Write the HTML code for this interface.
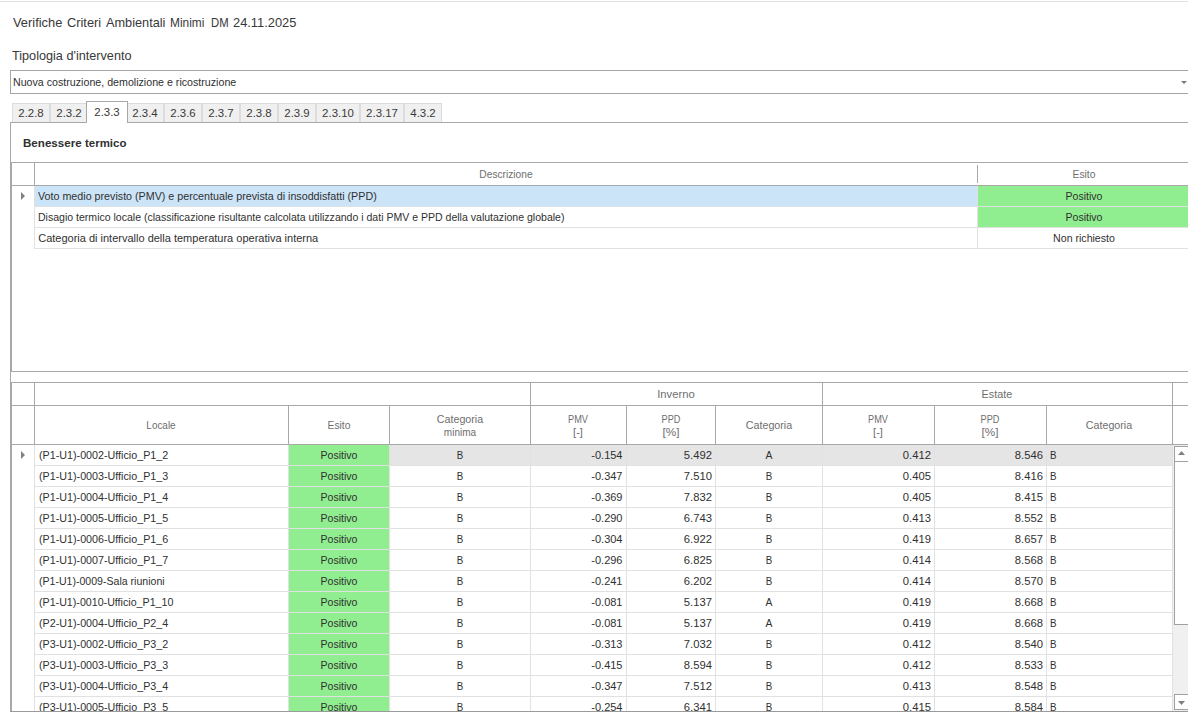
<!DOCTYPE html>
<html lang="it"><head><meta charset="utf-8"><title>Verifiche CAM</title><style>
html,body{margin:0;padding:0;background:#fff;}
body{width:1188px;height:712px;overflow:hidden;font-family:"Liberation Sans",sans-serif;}
#root{position:relative;width:1188px;height:712px;overflow:hidden;background:#fff;}
.r{position:absolute;display:block;}
.t,.t13,.tb,.h,.tab{position:absolute;white-space:nowrap;font-size:11px;line-height:20px;margin-top:-14px;color:#303030;}
.t13{font-size:13px;line-height:20px;margin-top:-15px;color:#383838;}
.tb{font-weight:bold;}
.h{color:#6e6e6e;}
.tab{color:#3a3a3a;}
</style></head><body><div id="root">
<div class="r" style="left:0px;top:1px;width:1188px;height:1px;background:#e3e3e3;"></div>
<div class="t13" style="transform:scaleX(0.9886);transform-origin:left center;left:13.2px;top:28px;">Verifiche</div>
<div class="t13" style="transform:scaleX(0.9836);transform-origin:left center;left:66.9px;top:28px;">Criteri</div>
<div class="t13" style="transform:scaleX(0.9786);transform-origin:left center;left:106.0px;top:28px;">Ambientali</div>
<div class="t13" style="transform:scaleX(0.9132);transform-origin:left center;left:169.7px;top:28px;">Minimi</div>
<div class="t13" style="transform:scaleX(0.8704);transform-origin:left center;left:210.9px;top:28px;">DM</div>
<div class="t13" style="transform:scaleX(0.9889);transform-origin:left center;left:232.8px;top:28px;">24.11.2025</div>
<div class="t13" style="transform:scaleX(0.9740);transform-origin:left center;left:12px;top:61px;">Tipologia d'intervento</div>
<div class="r" style="left:10px;top:70px;width:1178px;height:1px;background:#a6a6a6;"></div>
<div class="r" style="left:10px;top:93px;width:1178px;height:1px;background:#a6a6a6;"></div>
<div class="r" style="left:10px;top:70px;width:1px;height:24px;background:#a6a6a6;"></div>
<div class="t" style="transform:scaleX(0.9685);transform-origin:left center;left:13px;top:86px;">Nuova costruzione, demolizione e ricostruzione</div>
<svg class="r" style="left:1180px;top:81px" width="8" height="4" viewBox="0 0 8 4"><path d="M1 0h6l-3 3z" fill="#7a7a7a"/></svg>
<div class="r" style="left:12px;top:103px;width:38px;height:19px;background:#f0f0f0;border:1px solid #dcdcdc;border-bottom:none;box-sizing:border-box;"></div>
<div class="r" style="left:50px;top:103px;width:38px;height:19px;background:#f0f0f0;border:1px solid #dcdcdc;border-bottom:none;box-sizing:border-box;"></div>
<div class="r" style="left:126px;top:103px;width:38px;height:19px;background:#f0f0f0;border:1px solid #dcdcdc;border-bottom:none;box-sizing:border-box;"></div>
<div class="r" style="left:164px;top:103px;width:38px;height:19px;background:#f0f0f0;border:1px solid #dcdcdc;border-bottom:none;box-sizing:border-box;"></div>
<div class="r" style="left:202px;top:103px;width:38px;height:19px;background:#f0f0f0;border:1px solid #dcdcdc;border-bottom:none;box-sizing:border-box;"></div>
<div class="r" style="left:240px;top:103px;width:38px;height:19px;background:#f0f0f0;border:1px solid #dcdcdc;border-bottom:none;box-sizing:border-box;"></div>
<div class="r" style="left:278px;top:103px;width:38px;height:19px;background:#f0f0f0;border:1px solid #dcdcdc;border-bottom:none;box-sizing:border-box;"></div>
<div class="r" style="left:316px;top:103px;width:44px;height:19px;background:#f0f0f0;border:1px solid #dcdcdc;border-bottom:none;box-sizing:border-box;"></div>
<div class="r" style="left:360px;top:103px;width:44px;height:19px;background:#f0f0f0;border:1px solid #dcdcdc;border-bottom:none;box-sizing:border-box;"></div>
<div class="r" style="left:404px;top:103px;width:38px;height:19px;background:#f0f0f0;border:1px solid #dcdcdc;border-bottom:none;box-sizing:border-box;"></div>
<div class="r" style="left:10px;top:122px;width:1178px;height:1px;background:#a8a8a8;"></div>
<div class="r" style="left:10px;top:122px;width:1px;height:590px;background:#a8a8a8;"></div>
<div class="r" style="left:86px;top:101px;width:42px;height:22px;background:#ffffff;border:1px solid #a8a8a8;border-bottom:none;box-sizing:border-box;"></div>
<div class="tab" style="transform:scaleX(1.0400);transform-origin:center center;left:-119.0px;width:300px;text-align:center;top:117px;">2.2.8</div>
<div class="tab" style="transform:scaleX(1.0400);transform-origin:center center;left:-81.0px;width:300px;text-align:center;top:117px;">2.3.2</div>
<div class="tab" style="transform:scaleX(1.0400);transform-origin:center center;left:-43.0px;width:300px;text-align:center;top:116px;">2.3.3</div>
<div class="tab" style="transform:scaleX(1.0400);transform-origin:center center;left:-5.0px;width:300px;text-align:center;top:117px;">2.3.4</div>
<div class="tab" style="transform:scaleX(1.0400);transform-origin:center center;left:33.0px;width:300px;text-align:center;top:117px;">2.3.6</div>
<div class="tab" style="transform:scaleX(1.0400);transform-origin:center center;left:71.0px;width:300px;text-align:center;top:117px;">2.3.7</div>
<div class="tab" style="transform:scaleX(1.0400);transform-origin:center center;left:109.0px;width:300px;text-align:center;top:117px;">2.3.8</div>
<div class="tab" style="transform:scaleX(1.0400);transform-origin:center center;left:147.0px;width:300px;text-align:center;top:117px;">2.3.9</div>
<div class="tab" style="transform:scaleX(1.0400);transform-origin:center center;left:188.0px;width:300px;text-align:center;top:117px;">2.3.10</div>
<div class="tab" style="transform:scaleX(1.0400);transform-origin:center center;left:232.0px;width:300px;text-align:center;top:117px;">2.3.17</div>
<div class="tab" style="transform:scaleX(1.0400);transform-origin:center center;left:273.0px;width:300px;text-align:center;top:117px;">4.3.2</div>
<div class="tb" style="transform:scaleX(1.0528);transform-origin:left center;left:22.6px;top:147px;">Benessere</div>
<div class="tb" style="transform:scaleX(1.0415);transform-origin:left center;left:84.7px;top:147px;">termico</div>
<div class="r" style="left:11px;top:162px;width:1px;height:210px;background:#a8a8a8;"></div>
<div class="r" style="left:11px;top:162px;width:1177px;height:1px;background:#a8a8a8;"></div>
<div class="r" style="left:11px;top:185px;width:1177px;height:1px;background:#a8a8a8;"></div>
<div class="r" style="left:34px;top:162px;width:1px;height:24px;background:#a8a8a8;"></div>
<div class="r" style="left:977px;top:165px;width:1px;height:18px;background:#a8a8a8;"></div>
<div class="r" style="left:11px;top:371px;width:1177px;height:1px;background:#a8a8a8;"></div>
<div class="h" style="transform:scaleX(0.9267);transform-origin:center center;left:355.5px;width:300px;text-align:center;top:178px;">Descrizione</div>
<div class="h" style="transform:scaleX(0.9403);transform-origin:center center;left:933.5px;width:300px;text-align:center;top:178px;">Esito</div>
<div class="r" style="left:35px;top:186px;width:942px;height:20px;background:#cce4f7;"></div>
<div class="r" style="left:978px;top:186px;width:210px;height:20px;background:#90ee90;"></div>
<div class="r" style="left:35px;top:206px;width:1153px;height:1px;background:#e1e1e1;"></div>
<div class="t" style="transform:scaleX(0.9736);transform-origin:left center;left:38.2px;top:200px;">Voto medio previsto (PMV) e percentuale prevista di insoddisfatti (PPD)</div>
<div class="t" style="transform:scaleX(0.9600);transform-origin:center center;left:933.5px;width:300px;text-align:center;top:200px;">Positivo</div>
<div class="r" style="left:978px;top:207px;width:210px;height:20px;background:#90ee90;"></div>
<div class="r" style="left:35px;top:227px;width:1153px;height:1px;background:#e1e1e1;"></div>
<div class="t" style="transform:scaleX(0.9578);transform-origin:left center;left:38.2px;top:221px;">Disagio termico locale (classificazione risultante calcolata utilizzando i dati PMV e PPD della valutazione globale)</div>
<div class="t" style="transform:scaleX(0.9600);transform-origin:center center;left:933.5px;width:300px;text-align:center;top:221px;">Positivo</div>
<div class="r" style="left:35px;top:248px;width:1153px;height:1px;background:#e1e1e1;"></div>
<div class="t" style="left:38.2px;top:242px;">Categoria di intervallo della temperatura operativa interna</div>
<div class="t" style="transform:scaleX(0.9626);transform-origin:center center;left:933.5px;width:300px;text-align:center;top:242px;">Non richiesto</div>
<div class="r" style="left:34px;top:186px;width:1px;height:63px;background:#e1e1e1;"></div>
<div class="r" style="left:977px;top:186px;width:1px;height:63px;background:#e1e1e1;"></div>
<svg class="r" style="left:20px;top:191px" width="6" height="10" viewBox="0 0 6 10"><path d="M1 1L5 5L1 9z" fill="#808080"/></svg>
<div class="r" style="left:11px;top:382px;width:1px;height:330px;background:#a8a8a8;"></div>
<div class="r" style="left:10px;top:382px;width:1178px;height:1px;background:#a8a8a8;"></div>
<div class="r" style="left:11px;top:405px;width:1177px;height:1px;background:#a8a8a8;"></div>
<div class="r" style="left:11px;top:444px;width:1177px;height:1px;background:#a8a8a8;"></div>
<div class="r" style="left:10px;top:711px;width:1178px;height:1px;background:#9a9a9a;"></div>
<div class="r" style="left:34px;top:382px;width:1px;height:63px;background:#a8a8a8;"></div>
<div class="r" style="left:288px;top:405px;width:1px;height:40px;background:#a8a8a8;"></div>
<div class="r" style="left:389px;top:405px;width:1px;height:40px;background:#a8a8a8;"></div>
<div class="r" style="left:626px;top:405px;width:1px;height:40px;background:#a8a8a8;"></div>
<div class="r" style="left:715px;top:405px;width:1px;height:40px;background:#a8a8a8;"></div>
<div class="r" style="left:934px;top:405px;width:1px;height:40px;background:#a8a8a8;"></div>
<div class="r" style="left:1046px;top:405px;width:1px;height:40px;background:#a8a8a8;"></div>
<div class="r" style="left:530px;top:382px;width:1px;height:63px;background:#a8a8a8;"></div>
<div class="r" style="left:822px;top:382px;width:1px;height:63px;background:#a8a8a8;"></div>
<div class="r" style="left:1172px;top:382px;width:1px;height:63px;background:#a8a8a8;"></div>
<div class="h" style="transform:scaleX(1.0218);transform-origin:center center;left:526px;width:300px;text-align:center;top:398px;">Inverno</div>
<div class="h" style="transform:scaleX(0.9862);transform-origin:center center;left:847px;width:300px;text-align:center;top:398px;">Estate</div>
<div class="h" style="transform:scaleX(0.9022);transform-origin:center center;left:11px;width:300px;text-align:center;top:429px;">Locale</div>
<div class="h" style="transform:scaleX(0.9403);transform-origin:center center;left:188.5px;width:300px;text-align:center;top:429px;">Esito</div>
<div class="h" style="transform:scaleX(0.9727);transform-origin:center center;left:309.5px;width:300px;text-align:center;top:423px;">Categoria</div>
<div class="h" style="transform:scaleX(0.9097);transform-origin:center center;left:309.5px;width:300px;text-align:center;top:436px;">minima</div>
<div class="h" style="transform:scaleX(0.8347);transform-origin:center center;left:428px;width:300px;text-align:center;top:423px;">PMV</div>
<div class="h" style="left:428px;width:300px;text-align:center;top:436px;">[-]</div>
<div class="h" style="transform:scaleX(0.8311);transform-origin:center center;left:520.5px;width:300px;text-align:center;top:423px;">PPD</div>
<div class="h" style="transform:scaleX(1.0692);transform-origin:center center;left:520.5px;width:300px;text-align:center;top:436px;">[%]</div>
<div class="h" style="transform:scaleX(0.9727);transform-origin:center center;left:618.5px;width:300px;text-align:center;top:429px;">Categoria</div>
<div class="h" style="transform:scaleX(0.8347);transform-origin:center center;left:728px;width:300px;text-align:center;top:423px;">PMV</div>
<div class="h" style="left:728px;width:300px;text-align:center;top:436px;">[-]</div>
<div class="h" style="transform:scaleX(0.8311);transform-origin:center center;left:840px;width:300px;text-align:center;top:423px;">PPD</div>
<div class="h" style="transform:scaleX(1.0692);transform-origin:center center;left:840px;width:300px;text-align:center;top:436px;">[%]</div>
<div class="h" style="transform:scaleX(0.9727);transform-origin:center center;left:959px;width:300px;text-align:center;top:429px;">Categoria</div>
<div class="r" style="left:0;top:445px;width:1188px;height:266px;overflow:hidden">
<div class="r" style="left:390px;top:0px;width:783px;height:20px;background:#e5e5e5;"></div>
<div class="r" style="left:289px;top:0px;width:100px;height:20px;background:#90ee90;"></div>
<div class="r" style="left:35px;top:20px;width:1138px;height:1px;background:#e1e1e1;"></div>
<div class="t" style="transform:scaleX(0.9756);transform-origin:left center;left:38.7px;top:14px;">(P1-U1)-0002-Ufficio_P1_2</div>
<div class="t" style="transform:scaleX(0.9600);transform-origin:center center;left:188.5px;width:300px;text-align:center;top:14px;">Positivo</div>
<div class="t" style="transform:scaleX(0.8856);transform-origin:center center;left:309.5px;width:300px;text-align:center;top:14px;">B</div>
<div class="t" style="left:322.5px;width:300px;text-align:right;top:14px;">-0.154</div>
<div class="t" style="transform:scaleX(1.0220);transform-origin:right center;left:412px;width:300px;text-align:right;top:14px;">5.492</div>
<div class="t" style="transform:scaleX(0.9401);transform-origin:center center;left:618.5px;width:300px;text-align:center;top:14px;">A</div>
<div class="t" style="transform:scaleX(1.0220);transform-origin:right center;left:631px;width:300px;text-align:right;top:14px;">0.412</div>
<div class="t" style="transform:scaleX(1.0220);transform-origin:right center;left:742.5px;width:300px;text-align:right;top:14px;">8.546</div>
<div class="t" style="transform:scaleX(0.8856);transform-origin:left center;left:1050px;top:14px;">B</div>
<div class="r" style="left:289px;top:21px;width:100px;height:20px;background:#90ee90;"></div>
<div class="r" style="left:35px;top:41px;width:1138px;height:1px;background:#e1e1e1;"></div>
<div class="t" style="transform:scaleX(0.9756);transform-origin:left center;left:38.7px;top:35px;">(P1-U1)-0003-Ufficio_P1_3</div>
<div class="t" style="transform:scaleX(0.9600);transform-origin:center center;left:188.5px;width:300px;text-align:center;top:35px;">Positivo</div>
<div class="t" style="transform:scaleX(0.8856);transform-origin:center center;left:309.5px;width:300px;text-align:center;top:35px;">B</div>
<div class="t" style="left:322.5px;width:300px;text-align:right;top:35px;">-0.347</div>
<div class="t" style="transform:scaleX(1.0220);transform-origin:right center;left:412px;width:300px;text-align:right;top:35px;">7.510</div>
<div class="t" style="transform:scaleX(0.8856);transform-origin:center center;left:618.5px;width:300px;text-align:center;top:35px;">B</div>
<div class="t" style="transform:scaleX(1.0220);transform-origin:right center;left:631px;width:300px;text-align:right;top:35px;">0.405</div>
<div class="t" style="transform:scaleX(1.0220);transform-origin:right center;left:742.5px;width:300px;text-align:right;top:35px;">8.416</div>
<div class="t" style="transform:scaleX(0.8856);transform-origin:left center;left:1050px;top:35px;">B</div>
<div class="r" style="left:289px;top:42px;width:100px;height:20px;background:#90ee90;"></div>
<div class="r" style="left:35px;top:62px;width:1138px;height:1px;background:#e1e1e1;"></div>
<div class="t" style="transform:scaleX(0.9756);transform-origin:left center;left:38.7px;top:56px;">(P1-U1)-0004-Ufficio_P1_4</div>
<div class="t" style="transform:scaleX(0.9600);transform-origin:center center;left:188.5px;width:300px;text-align:center;top:56px;">Positivo</div>
<div class="t" style="transform:scaleX(0.8856);transform-origin:center center;left:309.5px;width:300px;text-align:center;top:56px;">B</div>
<div class="t" style="left:322.5px;width:300px;text-align:right;top:56px;">-0.369</div>
<div class="t" style="transform:scaleX(1.0220);transform-origin:right center;left:412px;width:300px;text-align:right;top:56px;">7.832</div>
<div class="t" style="transform:scaleX(0.8856);transform-origin:center center;left:618.5px;width:300px;text-align:center;top:56px;">B</div>
<div class="t" style="transform:scaleX(1.0220);transform-origin:right center;left:631px;width:300px;text-align:right;top:56px;">0.405</div>
<div class="t" style="transform:scaleX(1.0220);transform-origin:right center;left:742.5px;width:300px;text-align:right;top:56px;">8.415</div>
<div class="t" style="transform:scaleX(0.8856);transform-origin:left center;left:1050px;top:56px;">B</div>
<div class="r" style="left:289px;top:63px;width:100px;height:20px;background:#90ee90;"></div>
<div class="r" style="left:35px;top:83px;width:1138px;height:1px;background:#e1e1e1;"></div>
<div class="t" style="transform:scaleX(0.9756);transform-origin:left center;left:38.7px;top:77px;">(P1-U1)-0005-Ufficio_P1_5</div>
<div class="t" style="transform:scaleX(0.9600);transform-origin:center center;left:188.5px;width:300px;text-align:center;top:77px;">Positivo</div>
<div class="t" style="transform:scaleX(0.8856);transform-origin:center center;left:309.5px;width:300px;text-align:center;top:77px;">B</div>
<div class="t" style="left:322.5px;width:300px;text-align:right;top:77px;">-0.290</div>
<div class="t" style="transform:scaleX(1.0220);transform-origin:right center;left:412px;width:300px;text-align:right;top:77px;">6.743</div>
<div class="t" style="transform:scaleX(0.8856);transform-origin:center center;left:618.5px;width:300px;text-align:center;top:77px;">B</div>
<div class="t" style="transform:scaleX(1.0220);transform-origin:right center;left:631px;width:300px;text-align:right;top:77px;">0.413</div>
<div class="t" style="transform:scaleX(1.0220);transform-origin:right center;left:742.5px;width:300px;text-align:right;top:77px;">8.552</div>
<div class="t" style="transform:scaleX(0.8856);transform-origin:left center;left:1050px;top:77px;">B</div>
<div class="r" style="left:289px;top:84px;width:100px;height:20px;background:#90ee90;"></div>
<div class="r" style="left:35px;top:104px;width:1138px;height:1px;background:#e1e1e1;"></div>
<div class="t" style="transform:scaleX(0.9756);transform-origin:left center;left:38.7px;top:98px;">(P1-U1)-0006-Ufficio_P1_6</div>
<div class="t" style="transform:scaleX(0.9600);transform-origin:center center;left:188.5px;width:300px;text-align:center;top:98px;">Positivo</div>
<div class="t" style="transform:scaleX(0.8856);transform-origin:center center;left:309.5px;width:300px;text-align:center;top:98px;">B</div>
<div class="t" style="left:322.5px;width:300px;text-align:right;top:98px;">-0.304</div>
<div class="t" style="transform:scaleX(1.0220);transform-origin:right center;left:412px;width:300px;text-align:right;top:98px;">6.922</div>
<div class="t" style="transform:scaleX(0.8856);transform-origin:center center;left:618.5px;width:300px;text-align:center;top:98px;">B</div>
<div class="t" style="transform:scaleX(1.0220);transform-origin:right center;left:631px;width:300px;text-align:right;top:98px;">0.419</div>
<div class="t" style="transform:scaleX(1.0220);transform-origin:right center;left:742.5px;width:300px;text-align:right;top:98px;">8.657</div>
<div class="t" style="transform:scaleX(0.8856);transform-origin:left center;left:1050px;top:98px;">B</div>
<div class="r" style="left:289px;top:105px;width:100px;height:20px;background:#90ee90;"></div>
<div class="r" style="left:35px;top:125px;width:1138px;height:1px;background:#e1e1e1;"></div>
<div class="t" style="transform:scaleX(0.9756);transform-origin:left center;left:38.7px;top:119px;">(P1-U1)-0007-Ufficio_P1_7</div>
<div class="t" style="transform:scaleX(0.9600);transform-origin:center center;left:188.5px;width:300px;text-align:center;top:119px;">Positivo</div>
<div class="t" style="transform:scaleX(0.8856);transform-origin:center center;left:309.5px;width:300px;text-align:center;top:119px;">B</div>
<div class="t" style="left:322.5px;width:300px;text-align:right;top:119px;">-0.296</div>
<div class="t" style="transform:scaleX(1.0220);transform-origin:right center;left:412px;width:300px;text-align:right;top:119px;">6.825</div>
<div class="t" style="transform:scaleX(0.8856);transform-origin:center center;left:618.5px;width:300px;text-align:center;top:119px;">B</div>
<div class="t" style="transform:scaleX(1.0220);transform-origin:right center;left:631px;width:300px;text-align:right;top:119px;">0.414</div>
<div class="t" style="transform:scaleX(1.0220);transform-origin:right center;left:742.5px;width:300px;text-align:right;top:119px;">8.568</div>
<div class="t" style="transform:scaleX(0.8856);transform-origin:left center;left:1050px;top:119px;">B</div>
<div class="r" style="left:289px;top:126px;width:100px;height:20px;background:#90ee90;"></div>
<div class="r" style="left:35px;top:146px;width:1138px;height:1px;background:#e1e1e1;"></div>
<div class="t" style="transform:scaleX(0.9600);transform-origin:left center;left:38.7px;top:140px;">(P1-U1)-0009-Sala riunioni</div>
<div class="t" style="transform:scaleX(0.9600);transform-origin:center center;left:188.5px;width:300px;text-align:center;top:140px;">Positivo</div>
<div class="t" style="transform:scaleX(0.8856);transform-origin:center center;left:309.5px;width:300px;text-align:center;top:140px;">B</div>
<div class="t" style="left:322.5px;width:300px;text-align:right;top:140px;">-0.241</div>
<div class="t" style="transform:scaleX(1.0220);transform-origin:right center;left:412px;width:300px;text-align:right;top:140px;">6.202</div>
<div class="t" style="transform:scaleX(0.8856);transform-origin:center center;left:618.5px;width:300px;text-align:center;top:140px;">B</div>
<div class="t" style="transform:scaleX(1.0220);transform-origin:right center;left:631px;width:300px;text-align:right;top:140px;">0.414</div>
<div class="t" style="transform:scaleX(1.0220);transform-origin:right center;left:742.5px;width:300px;text-align:right;top:140px;">8.570</div>
<div class="t" style="transform:scaleX(0.8856);transform-origin:left center;left:1050px;top:140px;">B</div>
<div class="r" style="left:289px;top:147px;width:100px;height:20px;background:#90ee90;"></div>
<div class="r" style="left:35px;top:167px;width:1138px;height:1px;background:#e1e1e1;"></div>
<div class="t" style="transform:scaleX(0.9694);transform-origin:left center;left:38.7px;top:161px;">(P1-U1)-0010-Ufficio_P1_10</div>
<div class="t" style="transform:scaleX(0.9600);transform-origin:center center;left:188.5px;width:300px;text-align:center;top:161px;">Positivo</div>
<div class="t" style="transform:scaleX(0.8856);transform-origin:center center;left:309.5px;width:300px;text-align:center;top:161px;">B</div>
<div class="t" style="left:322.5px;width:300px;text-align:right;top:161px;">-0.081</div>
<div class="t" style="transform:scaleX(1.0220);transform-origin:right center;left:412px;width:300px;text-align:right;top:161px;">5.137</div>
<div class="t" style="transform:scaleX(0.9401);transform-origin:center center;left:618.5px;width:300px;text-align:center;top:161px;">A</div>
<div class="t" style="transform:scaleX(1.0220);transform-origin:right center;left:631px;width:300px;text-align:right;top:161px;">0.419</div>
<div class="t" style="transform:scaleX(1.0220);transform-origin:right center;left:742.5px;width:300px;text-align:right;top:161px;">8.668</div>
<div class="t" style="transform:scaleX(0.8856);transform-origin:left center;left:1050px;top:161px;">B</div>
<div class="r" style="left:289px;top:168px;width:100px;height:20px;background:#90ee90;"></div>
<div class="r" style="left:35px;top:188px;width:1138px;height:1px;background:#e1e1e1;"></div>
<div class="t" style="transform:scaleX(0.9756);transform-origin:left center;left:38.7px;top:182px;">(P2-U1)-0004-Ufficio_P2_4</div>
<div class="t" style="transform:scaleX(0.9600);transform-origin:center center;left:188.5px;width:300px;text-align:center;top:182px;">Positivo</div>
<div class="t" style="transform:scaleX(0.8856);transform-origin:center center;left:309.5px;width:300px;text-align:center;top:182px;">B</div>
<div class="t" style="left:322.5px;width:300px;text-align:right;top:182px;">-0.081</div>
<div class="t" style="transform:scaleX(1.0220);transform-origin:right center;left:412px;width:300px;text-align:right;top:182px;">5.137</div>
<div class="t" style="transform:scaleX(0.9401);transform-origin:center center;left:618.5px;width:300px;text-align:center;top:182px;">A</div>
<div class="t" style="transform:scaleX(1.0220);transform-origin:right center;left:631px;width:300px;text-align:right;top:182px;">0.419</div>
<div class="t" style="transform:scaleX(1.0220);transform-origin:right center;left:742.5px;width:300px;text-align:right;top:182px;">8.668</div>
<div class="t" style="transform:scaleX(0.8856);transform-origin:left center;left:1050px;top:182px;">B</div>
<div class="r" style="left:289px;top:189px;width:100px;height:20px;background:#90ee90;"></div>
<div class="r" style="left:35px;top:209px;width:1138px;height:1px;background:#e1e1e1;"></div>
<div class="t" style="transform:scaleX(0.9756);transform-origin:left center;left:38.7px;top:203px;">(P3-U1)-0002-Ufficio_P3_2</div>
<div class="t" style="transform:scaleX(0.9600);transform-origin:center center;left:188.5px;width:300px;text-align:center;top:203px;">Positivo</div>
<div class="t" style="transform:scaleX(0.8856);transform-origin:center center;left:309.5px;width:300px;text-align:center;top:203px;">B</div>
<div class="t" style="left:322.5px;width:300px;text-align:right;top:203px;">-0.313</div>
<div class="t" style="transform:scaleX(1.0220);transform-origin:right center;left:412px;width:300px;text-align:right;top:203px;">7.032</div>
<div class="t" style="transform:scaleX(0.8856);transform-origin:center center;left:618.5px;width:300px;text-align:center;top:203px;">B</div>
<div class="t" style="transform:scaleX(1.0220);transform-origin:right center;left:631px;width:300px;text-align:right;top:203px;">0.412</div>
<div class="t" style="transform:scaleX(1.0220);transform-origin:right center;left:742.5px;width:300px;text-align:right;top:203px;">8.540</div>
<div class="t" style="transform:scaleX(0.8856);transform-origin:left center;left:1050px;top:203px;">B</div>
<div class="r" style="left:289px;top:210px;width:100px;height:20px;background:#90ee90;"></div>
<div class="r" style="left:35px;top:230px;width:1138px;height:1px;background:#e1e1e1;"></div>
<div class="t" style="transform:scaleX(0.9756);transform-origin:left center;left:38.7px;top:224px;">(P3-U1)-0003-Ufficio_P3_3</div>
<div class="t" style="transform:scaleX(0.9600);transform-origin:center center;left:188.5px;width:300px;text-align:center;top:224px;">Positivo</div>
<div class="t" style="transform:scaleX(0.8856);transform-origin:center center;left:309.5px;width:300px;text-align:center;top:224px;">B</div>
<div class="t" style="left:322.5px;width:300px;text-align:right;top:224px;">-0.415</div>
<div class="t" style="transform:scaleX(1.0220);transform-origin:right center;left:412px;width:300px;text-align:right;top:224px;">8.594</div>
<div class="t" style="transform:scaleX(0.8856);transform-origin:center center;left:618.5px;width:300px;text-align:center;top:224px;">B</div>
<div class="t" style="transform:scaleX(1.0220);transform-origin:right center;left:631px;width:300px;text-align:right;top:224px;">0.412</div>
<div class="t" style="transform:scaleX(1.0220);transform-origin:right center;left:742.5px;width:300px;text-align:right;top:224px;">8.533</div>
<div class="t" style="transform:scaleX(0.8856);transform-origin:left center;left:1050px;top:224px;">B</div>
<div class="r" style="left:289px;top:231px;width:100px;height:20px;background:#90ee90;"></div>
<div class="r" style="left:35px;top:251px;width:1138px;height:1px;background:#e1e1e1;"></div>
<div class="t" style="transform:scaleX(0.9756);transform-origin:left center;left:38.7px;top:245px;">(P3-U1)-0004-Ufficio_P3_4</div>
<div class="t" style="transform:scaleX(0.9600);transform-origin:center center;left:188.5px;width:300px;text-align:center;top:245px;">Positivo</div>
<div class="t" style="transform:scaleX(0.8856);transform-origin:center center;left:309.5px;width:300px;text-align:center;top:245px;">B</div>
<div class="t" style="left:322.5px;width:300px;text-align:right;top:245px;">-0.347</div>
<div class="t" style="transform:scaleX(1.0220);transform-origin:right center;left:412px;width:300px;text-align:right;top:245px;">7.512</div>
<div class="t" style="transform:scaleX(0.8856);transform-origin:center center;left:618.5px;width:300px;text-align:center;top:245px;">B</div>
<div class="t" style="transform:scaleX(1.0220);transform-origin:right center;left:631px;width:300px;text-align:right;top:245px;">0.413</div>
<div class="t" style="transform:scaleX(1.0220);transform-origin:right center;left:742.5px;width:300px;text-align:right;top:245px;">8.548</div>
<div class="t" style="transform:scaleX(0.8856);transform-origin:left center;left:1050px;top:245px;">B</div>
<div class="r" style="left:289px;top:252px;width:100px;height:20px;background:#90ee90;"></div>
<div class="r" style="left:35px;top:272px;width:1138px;height:1px;background:#e1e1e1;"></div>
<div class="t" style="transform:scaleX(0.9756);transform-origin:left center;left:38.7px;top:266px;">(P3-U1)-0005-Ufficio_P3_5</div>
<div class="t" style="transform:scaleX(0.9600);transform-origin:center center;left:188.5px;width:300px;text-align:center;top:266px;">Positivo</div>
<div class="t" style="transform:scaleX(0.8856);transform-origin:center center;left:309.5px;width:300px;text-align:center;top:266px;">B</div>
<div class="t" style="left:322.5px;width:300px;text-align:right;top:266px;">-0.254</div>
<div class="t" style="transform:scaleX(1.0220);transform-origin:right center;left:412px;width:300px;text-align:right;top:266px;">6.341</div>
<div class="t" style="transform:scaleX(0.8856);transform-origin:center center;left:618.5px;width:300px;text-align:center;top:266px;">B</div>
<div class="t" style="transform:scaleX(1.0220);transform-origin:right center;left:631px;width:300px;text-align:right;top:266px;">0.415</div>
<div class="t" style="transform:scaleX(1.0220);transform-origin:right center;left:742.5px;width:300px;text-align:right;top:266px;">8.584</div>
<div class="t" style="transform:scaleX(0.8856);transform-origin:left center;left:1050px;top:266px;">B</div>
<div class="r" style="left:34px;top:0px;width:1px;height:266px;background:#e1e1e1;"></div>
<div class="r" style="left:288px;top:0px;width:1px;height:266px;background:#e1e1e1;"></div>
<div class="r" style="left:389px;top:0px;width:1px;height:266px;background:#e1e1e1;"></div>
<div class="r" style="left:530px;top:0px;width:1px;height:266px;background:#e1e1e1;"></div>
<div class="r" style="left:626px;top:0px;width:1px;height:266px;background:#e1e1e1;"></div>
<div class="r" style="left:715px;top:0px;width:1px;height:266px;background:#e1e1e1;"></div>
<div class="r" style="left:822px;top:0px;width:1px;height:266px;background:#e1e1e1;"></div>
<div class="r" style="left:934px;top:0px;width:1px;height:266px;background:#e1e1e1;"></div>
<div class="r" style="left:1046px;top:0px;width:1px;height:266px;background:#e1e1e1;"></div>
<div class="r" style="left:1172px;top:0px;width:1px;height:266px;background:#e1e1e1;"></div>
</div>
<svg class="r" style="left:20px;top:450px" width="6" height="10" viewBox="0 0 6 10"><path d="M1 1L5 5L1 9z" fill="#808080"/></svg>
<div class="r" style="left:1173px;top:445px;width:15px;height:266px;background:#f0f0f0;"></div>
<div class="r" style="left:1174px;top:446px;width:20px;height:16px;background:#ffffff;border:1px solid #a0a0a0;box-sizing:border-box;"></div>
<div class="r" style="left:1174px;top:461px;width:20px;height:164px;background:#ffffff;border:1px solid #a0a0a0;box-sizing:border-box;"></div>
<div class="r" style="left:1174px;top:694px;width:20px;height:16px;background:#ffffff;border:1px solid #a0a0a0;box-sizing:border-box;"></div>
<svg class="r" style="left:1178px;top:451px" width="7" height="4" viewBox="0 0 7 4"><path d="M0 4L3.5 0L7 4z" fill="#808080"/></svg>
<svg class="r" style="left:1178px;top:701px" width="7" height="4" viewBox="0 0 7 4"><path d="M0 0L3.5 4L7 0z" fill="#808080"/></svg>
</div></body></html>
